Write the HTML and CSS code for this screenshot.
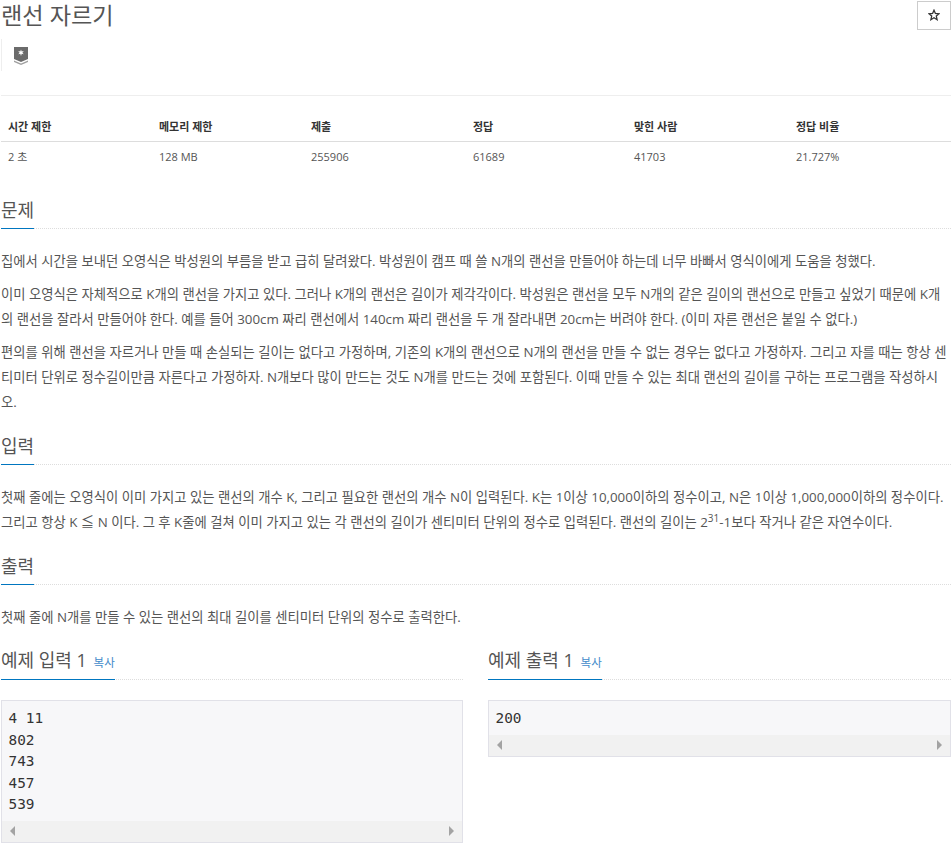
FILE: index.html
```html
<!DOCTYPE html>
<html lang="ko">
<head>
<meta charset="utf-8">
<title>랜선 자르기</title>
<link rel="stylesheet" href="styles.css">
</head>
<body>
<header class="head">
  <h1 class="title">랜선 자르기</h1>
  <button class="star" aria-label="즐겨찾기">
    <svg width="12" height="12" viewBox="0 0 12 12"><path d="M6 1.2L7.4 4.5L11 4.8L8.3 7.1L9.1 10.7L6 8.8L2.9 10.7L3.7 7.1L1 4.8L4.6 4.5Z" fill="none" stroke="#333" stroke-width="1.3"/></svg>
  </button>
</header>
<div class="tier-row">
  <svg class="tier" width="14" height="18" viewBox="0 0 14 18">
    <path d="M0 0H14V12L7 15L0 12Z" fill="#6b6b6b"/>
    <path d="M0 13.5L7 16.5L14 13.5V15L7 18L0 15Z" fill="#a0a0a0"/>
    <path d="M7 2.5L7.7 4.6L9.8 4.1L8.4 5.7L9.8 7.3L7.7 6.8L7 8.9L6.3 6.8L4.2 7.3L5.6 5.7L4.2 4.1L6.3 4.6Z" fill="#fff"/>
  </svg>
</div>
<hr class="rule">
<table class="stats">
  <thead>
    <tr><th>시간 제한</th><th>메모리 제한</th><th>제출</th><th>정답</th><th>맞힌 사람</th><th>정답 비율</th></tr>
  </thead>
  <tbody>
    <tr><td>2 초</td><td>128 MB</td><td>255906</td><td>61689</td><td>41703</td><td>21.727%</td></tr>
  </tbody>
</table>
<section class="sec sec-problem">
  <div class="sec-head"><h2>문제</h2></div>
  <div class="body">
    <p>집에서 시간을 보내던 오영식은 박성원의 부름을 받고 급히 달려왔다. 박성원이 캠프 때 쓸 N개의 랜선을 만들어야 하는데 너무 바빠서 영식이에게 도움을 청했다.</p>
    <p>이미 오영식은 자체적으로 K개의 랜선을 가지고 있다. 그러나 K개의 랜선은 길이가 제각각이다. 박성원은 랜선을 모두 N개의 같은 길이의 랜선으로 만들고 싶었기 때문에 K개의 랜선을 잘라서 만들어야 한다. 예를 들어 300cm 짜리 랜선에서 140cm 짜리 랜선을 두 개 잘라내면 20cm는 버려야 한다. (이미 자른 랜선은 붙일 수 없다.)</p>
    <p>편의를 위해 랜선을 자르거나 만들 때 손실되는 길이는 없다고 가정하며, 기존의 K개의 랜선으로 N개의 랜선을 만들 수 없는 경우는 없다고 가정하자. 그리고 자를 때는 항상 센티미터 단위로 정수길이만큼 자른다고 가정하자. N개보다 많이 만드는 것도 N개를 만드는 것에 포함된다. 이때 만들 수 있는 최대 랜선의 길이를 구하는 프로그램을 작성하시오.</p>
  </div>
</section>
<section class="sec">
  <div class="sec-head"><h2>입력</h2></div>
  <div class="body">
    <p>첫째 줄에는 오영식이 이미 가지고 있는 랜선의 개수 K, 그리고 필요한 랜선의 개수 N이 입력된다. K는 1이상 10,000이하의 정수이고, N은 1이상 1,000,000이하의 정수이다. 그리고 항상 K ≦ N 이다. 그 후 K줄에 걸쳐 이미 가지고 있는 각 랜선의 길이가 센티미터 단위의 정수로 입력된다. 랜선의 길이는 2<sup>31</sup>-1보다 작거나 같은 자연수이다.</p>
  </div>
</section>
<section class="sec">
  <div class="sec-head"><h2>출력</h2></div>
  <div class="body">
    <p>첫째 줄에 N개를 만들 수 있는 랜선의 최대 길이를 센티미터 단위의 정수로 출력한다.</p>
  </div>
</section>
<div class="samples">
  <section class="sample">
    <div class="sec-head"><h2>예제 입력 1 <a class="copy">복사</a></h2></div>
    <div class="code">
      <pre>4 11
802
743
457
539</pre>
      <div class="scroll"><span class="arrow-l"></span><span class="arrow-r"></span></div>
    </div>
  </section>
  <section class="sample">
    <div class="sec-head"><h2>예제 출력 1 <a class="copy">복사</a></h2></div>
    <div class="code">
      <pre>200</pre>
      <div class="scroll"><span class="arrow-l"></span><span class="arrow-r"></span></div>
    </div>
  </section>
</div>
</body>
</html>
```
FILE: styles.css
```css
* { box-sizing: border-box; }
html, body { margin: 0; padding: 0; }
body {
  padding: 0 1px;
  font-family: "Open Sans", "Noto Sans CJK KR", sans-serif;
  font-size: 13px;
  line-height: 25px;
  color: #555;
  background: #fff;
  overflow: hidden;
  height: 844px;
}
.head { display: flex; justify-content: space-between; align-items: flex-start; height: 39px; }
.title { margin: 0; font-size: 23.2px; font-weight: 400; line-height: 30px; color: #555; white-space: nowrap; }
.star {
  display: flex; align-items: center; justify-content: center;
  width: 34px; height: 29px; margin: 1px 0 0; padding: 0 0 2px;
  border: 1px solid #ccc; background: #fff;
}
.tier-row { height: 32px; border-left: 1px solid #eee; padding: 8px 0 0 12px; }
.tier { display: block; }
.rule { margin: 24px 0 0; border: 0; border-top: 1px solid #eee; }
.stats { width: 100%; margin-top: 20px; border-collapse: collapse; table-layout: fixed; font-size: 11px; line-height: 16px; }
.stats th { height: 25px; padding: 0 7px 3px; text-align: left; font-weight: 700; color: #333; border-bottom: 1px solid #ddd; }
.stats td { height: 31px; padding: 0 7px; text-align: left; }
.stats th:nth-child(1) { width: 151px; }
.stats th:nth-child(2) { width: 152px; }
.stats th:nth-child(3) { width: 162px; }
.stats th:nth-child(4) { width: 161px; }
.stats th:nth-child(5) { width: 162px; }
.sec-problem { margin-top: 25px; }
.sec-head { border-bottom: 1px dotted #ddd; height: 32px; margin-bottom: 20px; }
h2 {
  display: inline-block; margin: 0; height: 32px; font-size: 18px; font-weight: 400; line-height: 26px;
  color: #555; border-bottom: 1px solid #0076c0;
}
.body { font-size: 13.33px; line-height: 25px; padding-bottom: 10px; }
.body p { margin: 0 0 8px; }
sup { font-size: 10px; line-height: 0; }
.samples { display: grid; grid-template-columns: 462px 463px; gap: 25px; }
.sample .sec-head { height: 32px; margin-bottom: 20px; }
.sample h2 { height: 32px; line-height: 24px; }
.copy { font-size: 11.5px; color: #428bca; margin-left: 2px; }
.code { border: 1px solid #e1e1e8; background: #f7f7f9; }
.code pre {
  margin: 0; padding: 7px 6.5px 5.5px;
  font-family: "DejaVu Sans Mono", monospace; font-size: 14.4px; line-height: 21.5px; color: #333;
}
.scroll { height: 21px; background: #f1f1f1; position: relative; }
.arrow-l, .arrow-r { position: absolute; top: 5px; width: 0; height: 0; border-top: 5px solid transparent; border-bottom: 5px solid transparent; }
.arrow-l { left: 8px; border-right: 5px solid #a3a3a3; }
.arrow-r { right: 8px; border-left: 5px solid #a3a3a3; }
```
